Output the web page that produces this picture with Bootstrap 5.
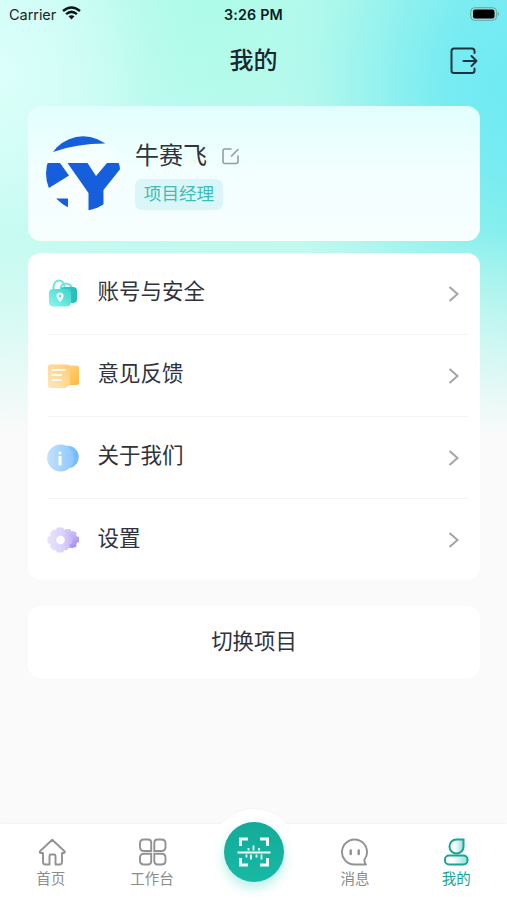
<!DOCTYPE html>
<html lang="zh-CN">
<head>
<meta charset="utf-8">
<meta name="viewport" content="width=device-width, initial-scale=1">
<title>我的</title>
<link href="https://cdn.jsdelivr.net/npm/bootstrap@5.3.0/dist/css/bootstrap.min.css" rel="stylesheet">
<style>
body{font-family:"Liberation Sans","Noto Sans CJK SC",sans-serif;background:#fafafa;color:#30333b}
svg{display:block;flex:none}
.screen{height:900px;overflow:hidden;background:
 linear-gradient(180deg,rgba(250,250,250,0) 230px,rgba(250,250,250,.5) 335px,#fafafa 436px),
 radial-gradient(ellipse 235px 310px at 507px 85px,#70eaf3 0%,rgba(114,234,243,.9) 25%,rgba(120,236,241,.42) 58%,rgba(125,238,238,.1) 82%,rgba(125,238,238,0) 100%),
 radial-gradient(ellipse 190px 230px at 0 75px,#dcfffa 0%,rgba(220,255,250,.6) 45%,rgba(210,254,246,.15) 80%,rgba(200,253,243,0) 100%),
 radial-gradient(ellipse 190px 160px at 210px 10px,#aefbe9 0%,rgba(178,251,236,0) 100%),
 linear-gradient(90deg,#bffaf0,#bbf9ee 60%,#9bf4e8)}
.side{flex:1 1 0}
.status{height:28px;font:14.5px Inter,sans-serif;color:#16262b}
.carrier{letter-spacing:-.05px;padding-left:1px}
.clock{font-weight:600;font-size:14.3px;color:#0c1b1d;letter-spacing:.15px}
.title-bar{height:64px;margin-bottom:14px;padding-top:1px}
.page-name{font-size:24px;line-height:36px;font-weight:500;color:#1b2630;padding-top:1px}
.panel{margin:0 27px 0 28px;border-radius:13px;background:#fff}
.profile{height:135px;margin-bottom:12px;padding-left:17px;background:linear-gradient(180deg,#e1fffe,#f2fffe 48%,#f8fefe)}
.who{margin-left:13px;padding-top:1px}
.user-name{font-size:24px;line-height:34px;padding-top:1px}
.role{width:88px;height:31px;border-radius:7px;background:#dbf6f9;color:#3dbdb5;font-size:17.6px;line-height:30px;margin-top:6px}
.menu{height:327px;margin-bottom:26px;padding:0 12px 0 19px}
.menu-item{height:82px;border-bottom:1px solid #f4f4f5;font-size:21.5px;line-height:32px}
.menu-item:last-child{border-bottom:0}
.menu-item span{margin-left:18.500px;margin-bottom:3px}
.menu-item .chev{margin-left:auto;margin-right:7px}
.switch{height:72px;font-size:21.4px;margin-bottom:146px}
.tabs{height:76px;background:#fff;box-shadow:0 -1px 2px rgba(0,0,0,.035)}
.tab{flex:1 1 0;color:#8c8c8c;font-size:14.5px;line-height:20px;padding-top:13px}
.tab.on{color:#16a694}
.bump{width:86px;height:86px;left:50%;top:-15px;margin-left:-43px;border-radius:50%;background:#fff;box-shadow:0 -1px 2px rgba(0,0,0,.025)}
.cover{left:0;right:0;top:0;height:76px;background:#fff}
.tab span{padding-top:1px}
.scan{width:60px;height:60px;border-radius:50%;background:linear-gradient(180deg,#13ab98,#17b9a5);box-shadow:0 6px 12px rgba(37,213,192,.32);top:-2px}
</style>
</head>
<body>
<div class="screen d-flex flex-column">
  <header class="status d-flex align-items-center px-2">
    <div class="side d-flex align-items-center gap-2"><span class="carrier">Carrier</span>
      <svg width="19" height="14" viewBox="0 0 19 14" fill="none" stroke="#071517" stroke-width="2.500" transform="translate(-2 -1)"><path d="M1 5Q9.500-2 18 5M4.100 8.100Q9.500 3.700 14.900 8.100"/><path d="M6.500 10.300Q9.500 8 12.500 10.300L9.500 13.500z" fill="#071517" stroke="none"/></svg>
    </div>
    <span class="clock">3:26 PM</span>
    <div class="side d-flex justify-content-end">
      <svg width="30" height="14" viewBox="0 0 30 14"><rect x="1.700" y=".7" width="26" height="12.600" rx="4" fill="#9adbd9" stroke="#60a8ab"/><rect x="4" y="2.600" width="21.500" height="8.800" rx="2.200" fill="#000"/><path d="M28.700 5v4q1.300-.7 1.300-2t-1.300-2" fill="#60a8ab"/></svg>
    </div>
  </header>
  <div class="title-bar d-flex align-items-center">
    <div class="side"></div><h1 class="page-name m-0">我的</h1>
    <div class="side d-flex justify-content-end">
      <svg class="me-4" width="34" height="28" viewBox="0 0 34 28" fill="none" stroke="#1d3440" stroke-width="2" stroke-linecap="round" stroke-linejoin="round"><path d="M25.500 6V4q0-2.500-2.500-2.500H5Q2.500 1.500 2.500 4V23.500q0 2.500 2.500 2.500H23q2.500 0 2.500-2.500V21.500M14.500 14H27.500M22.500 9l5 5-5 5"/></svg>
    </div>
  </div>
  <section class="panel profile d-flex align-items-center">
    <svg width="77" height="76" viewBox="0 0 77 76"><defs><clipPath id="av"><circle cx="38.200" cy="37.500" r="37.200"/></clipPath></defs><circle cx="38.200" cy="37.500" r="37.200" fill="#fff" opacity=".4"/><g clip-path="url(#av)" fill="#165fdc"><path d="M8 16Q31 7.500 60 7.500V0H10zM-1 27H15L24 39.500 4 52H-1zM11 62.500H23V73zM22.500 27H42.500L51 40 62 27H76V32L58.500 54V76H43.500V57z"/></g></svg>
    <div class="who">
      <div class="d-flex align-items-center"><span class="user-name">牛赛飞</span>
        <svg class="ms-3" width="17" height="18" viewBox="0 0 17 18" fill="none" stroke="#969d9e" stroke-width="1.600" stroke-linecap="round" stroke-linejoin="round" transform="translate(-1 0)"><path d="M9 2H3Q1 2 1 4V14.500q0 2 2 2H14q2 0 2-2V9M9.500 9l6.500-6.500"/></svg>
      </div>
      <div class="role text-center">项目经理</div>
    </div>
  </section>
  <section class="panel menu">
    <div class="menu-item d-flex align-items-center">
      <svg width="32" height="32" viewBox="0 0 32 32"><defs><linearGradient id="lk" x1="0" x2="1"><stop stop-color="#35d4c9"/><stop offset="1" stop-color="#25bdb5"/></linearGradient><linearGradient id="lf" x1="0" y1="1" x2="1" y2="0"><stop stop-color="#8af6ef"/><stop offset="1" stop-color="#3fd3cb"/></linearGradient></defs><path d="M6.500 12V9a5.500 6.500 0 0 1 11 0v3M14 11V8a6 5.500 0 0 1 10.500 1v3" fill="none" stroke="#6be7e0" stroke-width="2"/><rect x="13" y="9" width="17" height="16" rx="4" fill="url(#lk)"/><rect x="2" y="11" width="22" height="17.500" rx="4" fill="url(#lf)"/><path d="M13 14.500a3.600 3.600 0 0 1 3.600 3.600q0 2-3.600 6.200-3.600-4.200-3.600-6.200a3.600 3.600 0 0 1 3.600-3.600" fill="#f2fffe"/><circle cx="13" cy="18" r="1.200" fill="#48d8d2"/></svg>
      <span>账号与安全</span><svg class="chev" width="14" height="18" viewBox="0 0 14 18" fill="none" stroke="#a5a5a5" stroke-width="2"><path d="M2.500 2l8 7-8 7"/></svg>
    </div>
    <div class="menu-item d-flex align-items-center">
      <svg width="32" height="32" viewBox="0 0 32 32"><defs><linearGradient id="yb" x1="0" y1="0" x2="1" y2="1"><stop stop-color="#ffdc98"/><stop offset="1" stop-color="#ffb83b"/></linearGradient><linearGradient id="yf" x1="0" y1="1" x2="1" y2="0"><stop stop-color="#ffe8bb"/><stop offset="1" stop-color="#ffcc76"/></linearGradient></defs><rect x="11" y="5.500" width="21" height="19.500" rx="2.500" fill="url(#yb)"/><path d="M3 4.500H20q3 0 3 3V24l-4 4H3q-2 0-2-2V6.500q0-2 2-2" fill="url(#yf)"/><path d="M5.500 10H18M5.500 15H14M5.500 20H14" stroke="#fffaf0" stroke-width="2.200" stroke-linecap="round"/></svg>
      <span>意见反馈</span><svg class="chev" width="14" height="18" viewBox="0 0 14 18" fill="none" stroke="#a5a5a5" stroke-width="2"><path d="M2.500 2l8 7-8 7"/></svg>
    </div>
    <div class="menu-item d-flex align-items-center">
      <svg width="32" height="32" viewBox="0 0 32 32"><defs><linearGradient id="bb"><stop stop-color="#a7d3fd"/><stop offset="1" stop-color="#72b7fa"/></linearGradient><linearGradient id="bf"><stop stop-color="#c3e2fd"/><stop offset="1" stop-color="#8cc6fd"/></linearGradient></defs><circle cx="20.500" cy="15" r="11.200" fill="url(#bb)"/><circle cx="13.500" cy="16" r="13.400" fill="url(#bf)"/><path d="M13 14v9.500" stroke="#fff" stroke-width="3"/><circle cx="13" cy="11" r="1.600" fill="#fff"/></svg>
      <span>关于我们</span><svg class="chev" width="14" height="18" viewBox="0 0 14 18" fill="none" stroke="#a5a5a5" stroke-width="2"><path d="M2.500 2l8 7-8 7"/></svg>
    </div>
    <div class="menu-item d-flex align-items-center">
      <svg width="32" height="32" viewBox="0 0 32 32"><defs><linearGradient id="pb" gradientUnits="userSpaceOnUse" x1="20" y1="6" x2="29" y2="23"><stop stop-color="#d8cdf8"/><stop offset="1" stop-color="#a58bf2"/></linearGradient><linearGradient id="pf" gradientUnits="userSpaceOnUse" x1="1" y1="16" x2="25" y2="16"><stop stop-color="#e8e2fd"/><stop offset=".6" stop-color="#dcd3fb"/><stop offset="1" stop-color="#c5b5f7"/></linearGradient></defs><g fill="url(#pb)" stroke="url(#pb)" stroke-width="2" stroke-linejoin="round"><circle cx="22" cy="15.500" r="7.500"/><path d="M28 13.500h3v4h-3zM25 8l3.500 1-.5 3.500zM25 23l3.500-1-.5-3.500zM19 6h4v3h-4z"/></g><g fill="url(#pf)" stroke="url(#pf)" stroke-width="2" stroke-linejoin="round"><circle cx="13" cy="16" r="9.700"/><path d="M10.500 4.500h5L16.500 8h-7zM10.500 27.500h5l1-3.500h-7zM1.500 13.500v5L5 19.500v-7zM24.500 13.500v5L21 19.500v-7zM4 9.500L7 6.500 10 8 6 12zM22 9.500L19 6.500 16 8l4 4zM4 22.500l3 3 3-1.500-4-4zM22 22.500l-3 3-3-1.500 4-4z"/></g><circle cx="13.500" cy="16" r="4.200" fill="#fff"/></svg>
      <span>设置</span><svg class="chev" width="14" height="18" viewBox="0 0 14 18" fill="none" stroke="#a5a5a5" stroke-width="2"><path d="M2.500 2l8 7-8 7"/></svg>
    </div>
  </section>
  <div class="panel switch d-flex align-items-center justify-content-center">切换项目</div>
  <nav class="tabs d-flex position-relative">
    <div class="bump position-absolute"></div><div class="cover position-absolute"></div>
    <div class="tab d-flex flex-column align-items-center position-relative">
      <svg width="30" height="31" viewBox="0 0 30 31" fill="none" stroke="#929292" stroke-width="1.900" stroke-linejoin="round" stroke-linecap="round"><path d="M16.200 2.800L28.500 14.300q.8 1.500-1 1.700H26V25q0 2.500-2.500 2.500H19.500V19q0-1.500-1.500-1.500H15q-1.500 0-1.500 1.500V27.500H9.500Q7 27.500 7 25V16H5q-1.800-.2-1-1.700z"/></svg><span>首页</span>
    </div>
    <div class="tab d-flex flex-column align-items-center position-relative">
      <svg width="30" height="31" viewBox="0 0 30 31" fill="none" stroke="#929292" stroke-width="1.900"><path d="M7 2.500h4q3.200 0 3.200 3.200V14H7q-4 0-4-4V6.500q0-4 4-4M20.500 2.500h4q4 0 4 4V10q0 4-4 4h-7.200V5.700q0-3.200 3.200-3.200M7 16.800h7.200V24q0 3.500-3.200 3.500H7q-4 0-4-4v-2.700q0-4 4-4M17.300 16.800h7.200q4 0 4 4v2.700q0 4-4 4h-4q-3.200 0-3.200-3.500z"/></svg><span>工作台</span>
    </div>
    <div class="tab pt-0 d-flex flex-column align-items-center position-relative">
      <div class="scan position-relative d-flex align-items-center justify-content-center"><svg width="34" height="32" viewBox="0 0 34 32" fill="none" stroke="#effffc"><path d="M3.500 10V3H11M23 3h7.500v7M3.500 22v7H11M23 29h7.500V22" stroke-width="3"/><path d="M.5 16.500h33" stroke-width="2"/><path d="M11.500 12v2.500M16.500 9.500v5M22 12v2.500M9.500 18.500v3M14 18.500v5M19.500 18.500v3M24.500 18.500v5" stroke-width="1.800"/></svg></div>
    </div>
    <div class="tab d-flex flex-column align-items-center position-relative">
      <svg width="30" height="31" viewBox="0 0 30 31" fill="none" stroke="#929292" stroke-width="1.900" stroke-linejoin="round"><path d="M14.500 27.500A12.500 12.500 0 1 1 24.500 22.500Q24 25 26 27.500z"/><path d="M10.700 13.500v3.500M18.700 13.500v3.500" stroke-width="2.500" stroke-linecap="round"/></svg><span>消息</span>
    </div>
    <div class="tab on d-flex flex-column align-items-center position-relative">
      <svg width="30" height="31" viewBox="0 0 30 31" fill="none" stroke="#16a694" stroke-width="2"><defs><linearGradient id="me"><stop offset=".35" stop-color="#fff"/><stop offset="1" stop-color="#91e2d8"/></linearGradient></defs><path d="M15.500 2.500H22.500V9.500A7 7 0 1 1 15.500 2.500z" fill="url(#me)"/><rect x="4" y="18.500" width="22.500" height="9" rx="4" fill="url(#me)"/></svg><span>我的</span>
    </div>
  </nav>
</div>
<script src="https://cdn.jsdelivr.net/npm/bootstrap@5.3.0/dist/js/bootstrap.bundle.min.js"></script>
</body>
</html>
